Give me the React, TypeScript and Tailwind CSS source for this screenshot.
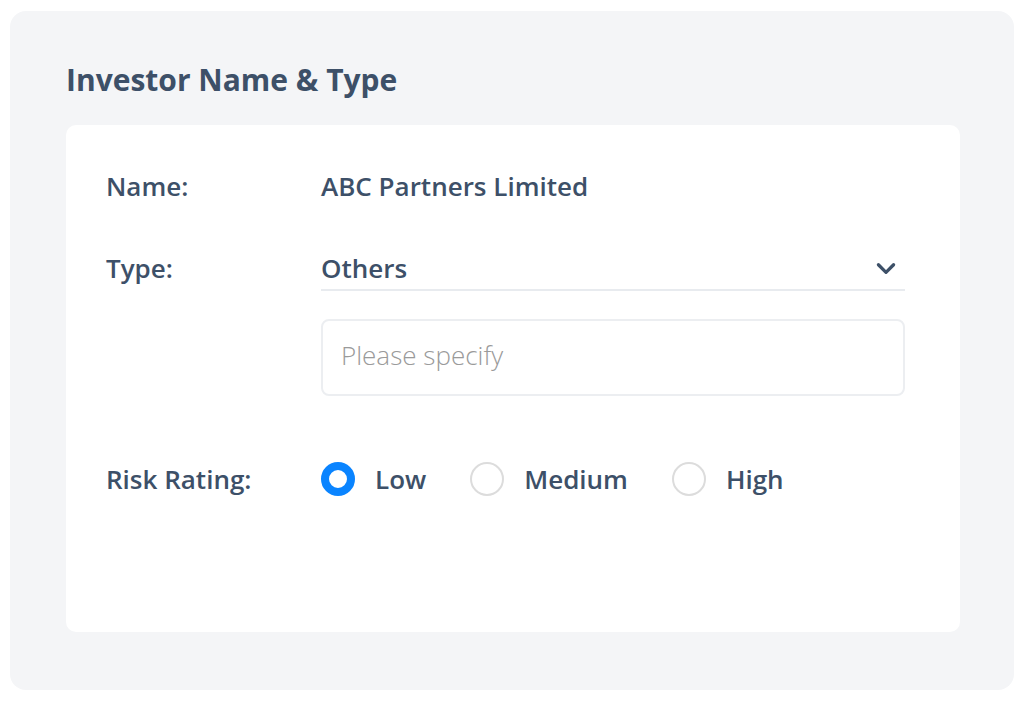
import { useState } from 'react';

const font = { fontFamily: '"Open Sans", Lato, sans-serif' };

function Radio({ label, checked, onClick }: { label: string; checked: boolean; onClick: () => void }) {
  return (
    <button type="button" onClick={onClick} className="flex items-center gap-[20px]">
      {checked ? (
        <span className="w-[34px] h-[34px] rounded-full border-[8px] border-[#0a84ff] bg-white" />
      ) : (
        <span className="w-[34px] h-[34px] rounded-full border-2 border-[#dcdcdc] bg-white" />
      )}
      <span className="text-[26px] font-semibold text-[#3d5068]">{label}</span>
    </button>
  );
}

export default function App() {
  const [risk, setRisk] = useState('Low');

  return (
    <div className="w-[1024px] h-[702px] bg-white pt-[11px] pl-[10px]" style={font}>
      <div className="w-[1004px] h-[679px] bg-[#f4f5f7] rounded-[16px] pl-[56px] pr-[54px] pt-[49px]">
        <h1 className="text-[30px] leading-[40px] font-bold text-[#3d5068]">
          Investor Name &amp; Type
        </h1>
        <div className="mt-[25px] h-[507px] bg-white rounded-[10px] pl-[40px] pr-[55px] pt-[43px]">
          <div className="flex items-center h-[36px]">
            <span className="w-[215px] text-[26px] font-semibold text-[#3d5068]">Name:</span>
            <span className="text-[26px] font-semibold text-[#3d5068]">ABC Partners Limited</span>
          </div>

          <div className="flex mt-[46px]">
            <span className="w-[215px] h-[36px] flex items-center text-[26px] font-semibold text-[#3d5068]">
              Type:
            </span>
            <div className="flex-1">
              <div className="flex items-center justify-between h-[36px] border-b-2 border-[#e8ebef] pb-[3px] box-content">
                <span className="text-[26px] font-semibold text-[#3d5068]">Others</span>
                <svg width="26" height="26" viewBox="0 0 24 24" className="mr-[6px]">
                  <path d="M5 9l7 7 7-7" fill="none" stroke="#3d5068" strokeWidth="3" strokeLinecap="round" strokeLinejoin="round" />
                </svg>
              </div>
              <input
                placeholder="Please specify"
                className="mt-[28px] w-full h-[77px] border-2 border-[#eceef1] rounded-[8px] pl-[18px] pr-[19px] pb-[6px] text-[26px] font-light text-[#3d5068] placeholder:text-[#9a9a9a] outline-none"
              />
            </div>
          </div>

          <div className="flex items-center mt-[65px] h-[36px]">
            <span className="w-[215px] text-[26px] font-semibold text-[#3d5068]">Risk Rating:</span>
            <div className="flex items-center gap-[44px]">
              {['Low', 'Medium', 'High'].map((r) => (
                <Radio key={r} label={r} checked={risk === r} onClick={() => setRisk(r)} />
              ))}
            </div>
          </div>
        </div>
      </div>
    </div>
  );
}
